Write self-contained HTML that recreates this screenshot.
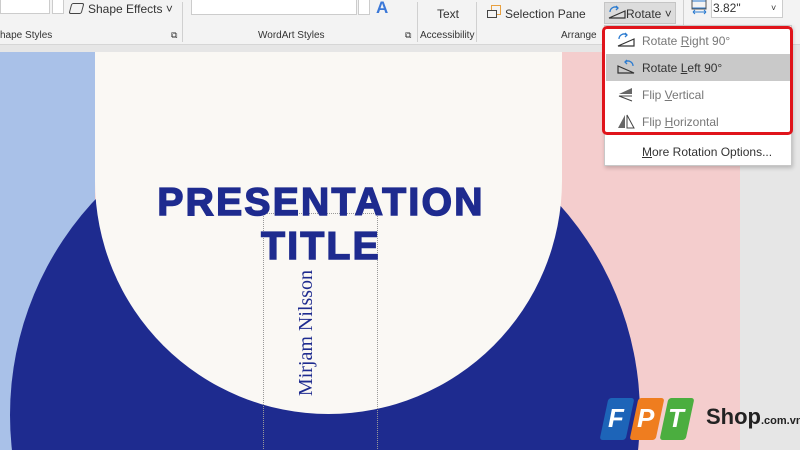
<!DOCTYPE html>
<html style="overflow:hidden"><head><meta charset="utf-8"><style>
*{margin:0;padding:0;box-sizing:border-box}
html,body{width:800px;height:450px;overflow:hidden}
body{position:relative;background:#e6e6e6;font-family:"Liberation Sans",sans-serif}
.a{position:absolute}
.rib{left:0;top:0;width:800px;height:45px;background:#f3f3f3;border-bottom:1px solid #d6d6d6}
.t{font-size:12px;color:#333;white-space:nowrap}
.menu{left:604px;top:25px;width:188px;height:141px;background:#fff;border:1px solid #c8c8c8;box-shadow:1px 2px 4px rgba(0,0,0,.2)}
.it{position:absolute;left:37px;font-size:12px;color:#777}
</style></head><body>
<div class="a rib"></div>
<div class="a" style="left:0;top:0;width:50px;height:14px;background:#fff;border:1px solid #ccc;border-top:none"></div>
<div class="a" style="left:52px;top:0;width:12px;height:14px;background:#fff;border:1px solid #ccc;border-top:none"></div>
<div class="a" style="left:70px;top:3px;width:13px;height:11px;border:1.5px solid #444;border-radius:2px;transform:skewX(-15deg)"></div>
<div class="a t" style="left:88px;top:2px;font-size:12px">Shape Effects ˅</div>
<div class="a t" style="left:0;top:30px;font-size:10px">hape Styles</div>
<div class="a t" style="left:171px;top:30px;font-size:9px">⧉</div>
<div class="a" style="left:182px;top:2px;width:1px;height:40px;background:#d0d0d0"></div>
<div class="a" style="left:191px;top:0;width:166px;height:15px;background:#fff;border:1px solid #ccc;border-top:none"></div>
<div class="a" style="left:358px;top:0;width:12px;height:15px;background:#fff;border:1px solid #ccc;border-top:none"></div>
<div class="a" style="left:376px;top:-2px;font-size:17px;font-weight:bold;color:#3b78d8">A</div>
<div class="a t" style="left:258px;top:30px;font-size:10px">WordArt Styles</div>
<div class="a t" style="left:405px;top:30px;font-size:9px">⧉</div>
<div class="a" style="left:417px;top:2px;width:1px;height:40px;background:#d0d0d0"></div>
<div class="a t" style="left:437px;top:7px">Text</div>
<div class="a t" style="left:420px;top:30px;font-size:10px">Accessibility</div>
<div class="a" style="left:476px;top:2px;width:1px;height:40px;background:#d0d0d0"></div>
<div class="a" style="left:491px;top:5px;width:10px;height:10px;border:1.5px solid #e8a040"></div>
<div class="a" style="left:487px;top:10px;width:10px;height:8px;border:1px solid #444;background:#f3f3f3"></div>
<div class="a t" style="left:505px;top:7px">Selection Pane</div>
<div class="a t" style="left:561px;top:30px;font-size:10px">Arrange</div>
<div class="a" style="left:604px;top:2px;width:72px;height:22px;background:#dcdcdc;border:1px solid #c5c5c5"></div>
<svg class="a" style="left:607px;top:4px" width="20" height="16"><path d="M3 8 A5 5 0 0 1 11 4 M9 2 L11 4 L9 6" stroke="#2b7bd0" fill="none" stroke-width="1.3"/><path d="M2 14 L18 14 L18 7 Z" stroke="#333" fill="none" stroke-width="1.2"/></svg>
<div class="a t" style="left:626px;top:7px">Rotate ˅</div>
<div class="a" style="left:683px;top:0;width:1px;height:44px;background:#d0d0d0"></div>
<svg class="a" style="left:690px;top:0" width="20" height="16"><path d="M2 1 H16 M2 8 H16 M3 12 H16 M3 12 L5 10 M3 12 L5 14 M16 12 L14 10 M16 12 L14 14" stroke="#2b7bd0" fill="none"/><path d="M2 0 V9 H16 V0" stroke="#555" fill="none"/></svg>
<div class="a" style="left:711px;top:0;width:72px;height:18px;background:#fff;border:1px solid #ccc;border-top:none"></div>
<div class="a t" style="left:713px;top:1px">3.82"</div>
<div class="a t" style="left:771px;top:3px;font-size:9px">˅</div>
<div class="a" style="left:0;top:52px;width:740px;height:398px;background:#f4cdcd;overflow:hidden">
  <div class="a" style="left:0;top:0;width:95px;height:398px;background:#a9c1e8"></div>
  <div class="a" style="left:10px;top:48px;width:630px;height:630px;border-radius:50%;background:#1e2b8f"></div>
  <div class="a" style="left:95px;top:0;width:467px;height:130px;background:#faf8f4"></div>
  <div class="a" style="left:95px;top:-105px;width:467px;height:467px;border-radius:50%;background:#faf8f4"></div>
  <div class="a" style="left:263px;top:161px;width:115px;height:240px;border:1px dotted #999"></div>
  <div class="a" style="left:71px;top:129px;width:500px;text-align:center;font-weight:900;font-size:39px;line-height:44px;color:#1e2b8f;letter-spacing:2.3px;-webkit-text-stroke:1.5px #1e2b8f">PRESENTATION<br>TITLE</div>
  <div class="a" style="left:236px;top:270px;width:140px;height:22px;transform:rotate(-90deg);font-family:'Liberation Serif',serif;font-size:20px;color:#1e2b8f;text-align:center;line-height:22px;white-space:nowrap">Mirjam Nilsson</div>
</div>
<div class="a" style="left:604px;top:398px;width:26px;height:42px;background:#1d64b8;transform:skewX(-12deg);border-radius:3px"></div>
<div class="a" style="left:634px;top:398px;width:26px;height:42px;background:#ef7d1f;transform:skewX(-12deg);border-radius:3px"></div>
<div class="a" style="left:664px;top:398px;width:26px;height:42px;background:#4bae3f;transform:skewX(-12deg);border-radius:3px"></div>
<div class="a" style="left:608px;top:403px;font-size:26px;font-weight:bold;font-style:italic;color:#fff;line-height:30px">F</div>
<div class="a" style="left:637px;top:403px;font-size:26px;font-weight:bold;font-style:italic;color:#fff;line-height:30px">P</div>
<div class="a" style="left:668px;top:403px;font-size:26px;font-weight:bold;font-style:italic;color:#fff;line-height:30px">T</div>
<div class="a" style="left:706px;top:404px;font-size:22px;font-weight:bold;color:#222;line-height:26px;white-space:nowrap;width:94px;overflow:hidden">Shop<span style="font-size:11px">.com.vn</span></div>
<div class="a menu">
  <div class="a" style="left:1px;top:28px;width:184px;height:27px;background:#c9c9c9"></div>
  <svg class="a" style="left:11px;top:6px" width="20" height="16"><path d="M3 7 A5 5 0 0 1 11 3 M9 1 L11 3 L9 5" stroke="#2b7bd0" fill="none" stroke-width="1.3"/><path d="M2 14 L18 14 L18 7 Z" stroke="#333" fill="none" stroke-width="1.2"/></svg>
  <div class="it" style="top:8px">Rotate <u>R</u>ight 90°</div>
  <svg class="a" style="left:11px;top:33px" width="20" height="16"><path d="M17 7 A5 5 0 0 0 9 3 M11 1 L9 3 L11 5" stroke="#2b7bd0" fill="none" stroke-width="1.3"/><path d="M2 14 L18 14 L2 7 Z" stroke="#333" fill="none" stroke-width="1.2"/></svg>
  <div class="it" style="top:35px;color:#333">Rotate <u>L</u>eft 90°</div>
  <svg class="a" style="left:11px;top:60px" width="20" height="16"><path d="M16 2 L3 8 L16 8 Z" fill="#666"/><path d="M16 10 L3 10 L16 15" stroke="#444" fill="none"/></svg>
  <div class="it" style="top:62px">Flip <u>V</u>ertical</div>
  <svg class="a" style="left:11px;top:87px" width="20" height="16"><path d="M9 2 L2 15 L9 15 Z" fill="#666"/><path d="M11 2 L18 15 L11 15 Z" stroke="#444" fill="none"/></svg>
  <div class="it" style="top:89px">Flip <u>H</u>orizontal</div>
  <div class="it" style="top:119px;color:#333"><u>M</u>ore Rotation Options...</div>
</div>
<div class="a" style="left:602px;top:26px;width:191px;height:109px;border:3px solid #e0141b;border-radius:5px"></div>
</body></html>
